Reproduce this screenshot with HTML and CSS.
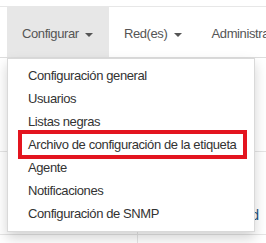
FILE: index.html
```html
<!DOCTYPE html>
<html lang="es">
<head>
  <meta charset="UTF-8">
  <title>Configurar</title>
  <link rel="stylesheet" href="styles.css">
</head>
<body>
  <div class="topbar"></div>

  <!-- Navigation -->
  <ul class="nav">
    <li class="active">Configurar <span class="caret"></span></li>
    <li>Red(es) <span class="caret"></span></li>
    <li>Administrar</li>
  </ul>

  <!-- Page content behind the menu -->
  <div class="content">
    <div class="row row-top">
      <div class="cell"></div>
      <div class="cell"></div>
    </div>
    <div class="row row-mid">
      <div class="cell"></div>
      <div class="cell link-cell"><span class="link">Actividad</span></div>
    </div>
    <div class="row row-bottom">
      <div class="cell"></div>
      <div class="cell"></div>
    </div>

    <!-- Dropdown menu -->
    <ul class="dropdown">
      <li>Configuración general</li>
      <li>Usuarios</li>
      <li>Listas negras</li>
      <li class="highlight">Archivo de configuración de la etiqueta</li>
      <li>Agente</li>
      <li>Notificaciones</li>
      <li>Configuración de SNMP</li>
    </ul>
  </div>
</body>
</html>
```

FILE: styles.css
```css
/* Reset */
* {
  margin: 0;
  padding: 0;
  box-sizing: border-box;
  font-family: "Liberation Sans", Arial, sans-serif;
}

body {
  background-color: #fff;
  width: 266px;
  height: 243px;
  overflow: hidden;
}

.topbar {
  height: 7px;
  border-bottom: 1px solid #e7e7e7;
}

/* Navigation */
.nav {
  display: flex;
  list-style: none;
  height: 51px;
  border-bottom: 1px solid #ddd;
  padding-left: 7px;
  white-space: nowrap;
}

.nav li {
  padding: 3px 15px 0;
  line-height: 47px;
  font-size: 13px;
  letter-spacing: -0.4px;
  color: #555;
}

.nav li.active {
  background-color: #e7e7e7;
  padding-right: 16px;
}

.caret {
  display: inline-block;
  width: 0;
  height: 0;
  margin-left: 3px;
  vertical-align: middle;
  border-top: 4px solid #555;
  border-left: 4px solid transparent;
  border-right: 4px solid transparent;
}

/* Content behind */
.content {
  position: relative;
}

.row {
  display: flex;
  border-bottom: 1px solid #e5e5e5;
}

.row-top {
  height: 94px;
}

.row-mid {
  height: 83px;
}

.row-bottom {
  height: 20px;
  border-bottom: none;
}

.cell {
  width: 138px;
  border-right: 1px solid #e5e5e5;
}

.cell + .cell {
  flex: 1;
  border-right: none;
}

.link-cell {
  display: flex;
  align-items: flex-end;
  justify-content: flex-end;
  padding: 0 7px 11px 0;
}

.link {
  font-size: 14px;
  color: #23527c;
}

/* Dropdown */
.dropdown {
  position: absolute;
  top: 0;
  left: 7px;
  width: 248px;
  list-style: none;
  padding: 5px 0 6px;
  background-color: #fff;
  border: 1px solid rgba(0, 0, 0, 0.15);
  box-shadow: 0 6px 12px rgba(0, 0, 0, 0.175);
}

.dropdown li {
  padding: 0 20px;
  line-height: 23px;
  font-size: 13px;
  letter-spacing: -0.4px;
  color: #333;
  white-space: nowrap;
}

.dropdown li.highlight {
  position: relative;
}

.dropdown li.highlight::after {
  content: "";
  position: absolute;
  top: -3px;
  bottom: -3px;
  left: 10px;
  right: 7px;
  border: 4px solid #e3151f;
}
```
